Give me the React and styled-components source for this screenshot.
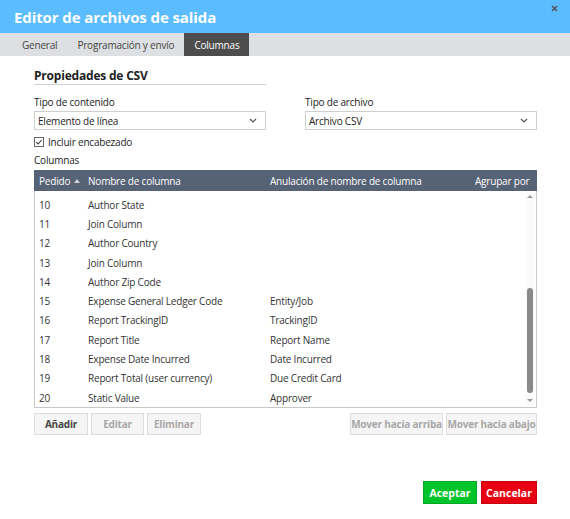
import styled, { createGlobalStyle } from "styled-components";

const GlobalStyle = createGlobalStyle`
  html, body {
    margin: 0;
    padding: 0;
    background: #ffffff;
  }
  body {
    font-family: "Open Sans", "Noto Sans", sans-serif;
    font-size: 10px;
    letter-spacing: -0.2px;
    color: #333;
  }
`;

const Dialog = styled.div`
  width: 570px;
  height: 519px;
  display: flex;
  flex-direction: column;
  background: #fff;
`;

const TitleBar = styled.div`
  height: 33px;
  background: #5bbcff;
  display: flex;
  align-items: center;
  padding: 0 12px 0 14px;
  position: relative;
`;

const Title = styled.h1`
  margin: 0;
  color: #fff;
  font-size: 15px;
  letter-spacing: -0.1px;
  font-weight: 700;
`;

const Close = styled.button`
  position: absolute;
  top: 2px;
  right: 10px;
  border: 0;
  background: none;
  padding: 0;
  width: 12px;
  height: 12px;
  display: flex;
  align-items: center;
  justify-content: center;
`;

const TabBar = styled.div`
  height: 23px;
  background: #dedfe2;
  display: flex;
  padding-left: 12px;
`;

const Tab = styled.div`
  display: flex;
  align-items: center;
  padding: 0 10px;
  color: ${(p) => (p.$active ? "#fff" : "#444")};
  background: ${(p) => (p.$active ? "#4d4d4d" : "transparent")};
`;

const Content = styled.div`
  flex: 1;
  display: flex;
  flex-direction: column;
  padding: 0 33px 0 34px;
`;

const Heading = styled.h2`
  margin: 12px 0 0;
  width: 232px;
  font-size: 12px;
  font-weight: 700;
  color: #222;
  line-height: 16px;
  border-bottom: 1px solid #cfcfcf;
`;

const FieldRow = styled.div`
  display: grid;
  grid-template-columns: 232px 232px;
  justify-content: space-between;
  margin-top: 10px;
`;

const Field = styled.div`
  display: flex;
  flex-direction: column;
`;

const Label = styled.label`
  color: #222;
  line-height: 15px;
  margin-bottom: 1px;
`;

const Select = styled.div`
  height: 19px;
  border: 1px solid #cfcfcf;
  box-sizing: border-box;
  display: flex;
  align-items: center;
  justify-content: space-between;
  padding: 0 8px 0 3px;
  color: #222;
`;

const CheckRow = styled.label`
  display: flex;
  align-items: center;
  gap: 4px;
  margin-top: 5px;
  line-height: 14px;
  color: #222;
`;

const Check = styled.span`
  width: 10px;
  height: 10px;
  border: 1px solid #666;
  box-sizing: border-box;
  display: flex;
  align-items: center;
  justify-content: center;
  background: #fff;
`;

const SubLabel = styled.div`
  margin-top: 4px;
  color: #222;
  line-height: 15px;
`;

const Table = styled.div`
  margin-top: 2px;
  display: flex;
  flex-direction: column;
`;

const HeaderRow = styled.div`
  height: 21px;
  background: #566275;
  color: #fff;
  display: grid;
  grid-template-columns: 49px 182px 205px 57px;
  align-items: center;
  padding-left: 5px;
  overflow: hidden;
  white-space: nowrap;
`;

const HeadCell = styled.div`
  display: flex;
  align-items: center;
  gap: 4px;
  overflow: hidden;
  ${(p) => p.$sort && "margin-right: -10px;"}
`;

const Body = styled.div`
  height: 217px;
  border: 1px solid #c8c8c8;
  border-top: 0;
  box-sizing: border-box;
  position: relative;
  padding-top: 4px;
`;

const Row = styled.div`
  height: 19.3px;
  display: grid;
  grid-template-columns: 49px 182px 1fr;
  align-items: center;
  padding-left: 4px;
  color: #333;
  white-space: nowrap;
`;

const ScrollTrack = styled.div`
  position: absolute;
  top: 2px;
  right: 2px;
  bottom: 2px;
  width: 8px;
  background: #fafafa;
`;

const Arrow = styled.div`
  position: absolute;
  left: 1px;
  width: 0;
  height: 0;
  border-left: 3px solid transparent;
  border-right: 3px solid transparent;
  ${(p) =>
    p.$up
      ? "top: 2px; border-bottom: 3px solid #999;"
      : "bottom: 3px; border-top: 3px solid #999;"}
`;

const Thumb = styled.div`
  position: absolute;
  left: 1px;
  width: 6px;
  top: 95px;
  height: 105px;
  border-radius: 3px;
  background: #8a8a8a;
`;

const ButtonRow = styled.div`
  display: flex;
  justify-content: space-between;
  margin-top: 5px;
`;

const Group = styled.div`
  display: flex;
  gap: 3px;
`;

const Button = styled.button`
  height: 22px;
  width: ${(p) => p.$width || 54}px;
  padding: 0;
  border: 1px solid #dcdcdc;
  background: #f5f5f5;
  font-family: inherit;
  font-size: 10px;
  letter-spacing: -0.2px;
  font-weight: 700;
  white-space: nowrap;
  color: ${(p) => (p.disabled ? "#a8a8a8" : "#444")};
`;

const Footer = styled.div`
  margin-top: auto;
  display: flex;
  justify-content: flex-end;
  gap: 4px;
  padding: 0 33px 15px 0;
`;

const ActionButton = styled.button`
  height: 23px;
  width: ${(p) => p.$width}px;
  border: 1px solid ${(p) => (p.$tone === "ok" ? "#00a824" : "#c8000f")};
  background: ${(p) => (p.$tone === "ok" ? "#00c42a" : "#e60012")};
  color: #fff;
  font-family: inherit;
  font-size: 10.5px;
  font-weight: 700;
  padding: 0;
`;

const rows = [
  ["10", "Author State", ""],
  ["11", "Join Column", ""],
  ["12", "Author Country", ""],
  ["13", "Join Column", ""],
  ["14", "Author Zip Code", ""],
  ["15", "Expense General Ledger Code", "Entity/Job"],
  ["16", "Report TrackingID", "TrackingID"],
  ["17", "Report Title", "Report Name"],
  ["18", "Expense Date Incurred", "Date Incurred"],
  ["19", "Report Total (user currency)", "Due Credit Card"],
  ["20", "Static Value", "Approver"],
];

function Chevron() {
  return (
    <svg width="8" height="5" viewBox="0 0 8 5">
      <path d="M1 1l3 3 3-3" fill="none" stroke="#555" strokeWidth="1.2" />
    </svg>
  );
}

export default function App() {
  return (
    <>
      <GlobalStyle />
      <Dialog>
        <TitleBar>
          <Title>Editor de archivos de salida</Title>
          <Close aria-label="Cerrar">
            <svg width="7" height="7" viewBox="0 0 7 7">
              <path d="M1 1l5 5M6 1L1 6" stroke="#555" strokeWidth="1.6" />
            </svg>
          </Close>
        </TitleBar>
        <TabBar>
          <Tab>General</Tab>
          <Tab>Programación y envío</Tab>
          <Tab $active>Columnas</Tab>
        </TabBar>
        <Content>
          <Heading>Propiedades de CSV</Heading>
          <FieldRow>
            <Field>
              <Label>Tipo de contenido</Label>
              <Select>
                Elemento de línea
                <Chevron />
              </Select>
            </Field>
            <Field>
              <Label>Tipo de archivo</Label>
              <Select>
                Archivo CSV
                <Chevron />
              </Select>
            </Field>
          </FieldRow>
          <CheckRow>
            <Check>
              <svg width="8" height="8" viewBox="0 0 8 8">
                <path d="M1.3 4.2l1.8 1.8 3.6-4" fill="none" stroke="#333" strokeWidth="1.1" />
              </svg>
            </Check>
            Incluir encabezado
          </CheckRow>
          <SubLabel>Columnas</SubLabel>
          <Table>
            <HeaderRow>
              <HeadCell $sort>
                Pedido
                <svg width="6" height="4" viewBox="0 0 6 4">
                  <path d="M0 4L3 0l3 4z" fill="#d0d4da" />
                </svg>
              </HeadCell>
              <HeadCell>Nombre de columna</HeadCell>
              <HeadCell>Anulación de nombre de columna</HeadCell>
              <HeadCell>Agrupar por</HeadCell>
            </HeaderRow>
            <Body>
              {rows.map(([n, name, alias]) => (
                <Row key={n}>
                  <span>{n}</span>
                  <span>{name}</span>
                  <span>{alias}</span>
                </Row>
              ))}
              <ScrollTrack>
                <Arrow $up />
                <Thumb />
                <Arrow />
              </ScrollTrack>
            </Body>
          </Table>
          <ButtonRow>
            <Group>
              <Button>Añadir</Button>
              <Button disabled $width={53}>Editar</Button>
              <Button disabled>Eliminar</Button>
            </Group>
            <Group>
              <Button disabled $width={93}>Mover hacia arriba</Button>
              <Button disabled $width={91}>Mover hacia abajo</Button>
            </Group>
          </ButtonRow>
        </Content>
        <Footer>
          <ActionButton $tone="ok" $width={54}>Aceptar</ActionButton>
          <ActionButton $tone="cancel" $width={56}>Cancelar</ActionButton>
        </Footer>
      </Dialog>
    </>
  );
}
